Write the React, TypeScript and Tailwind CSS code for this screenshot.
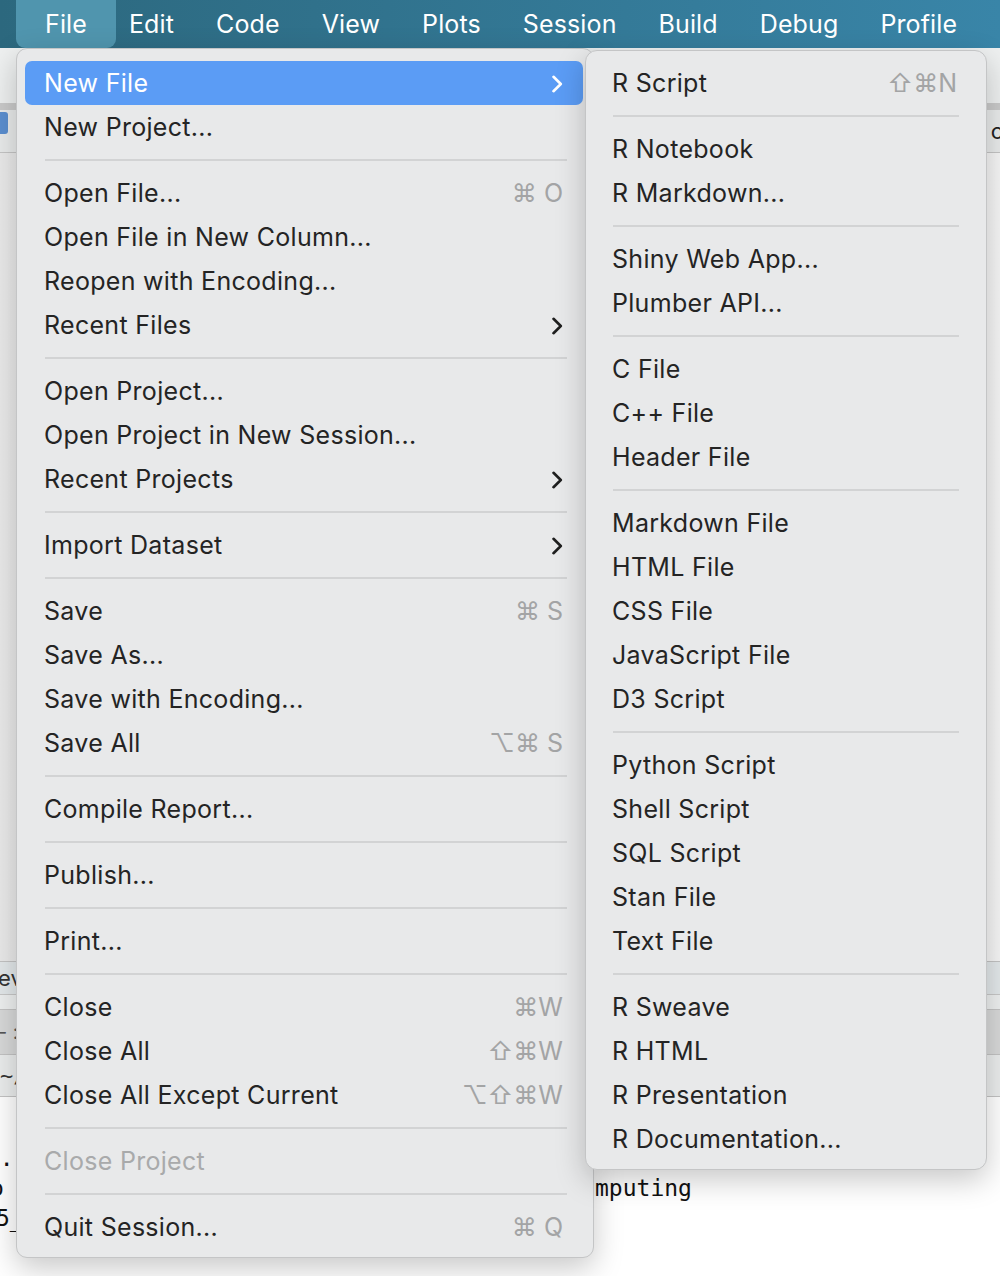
import React from "react";

type Item = { t: string; k?: string; sub?: boolean; hl?: boolean; dis?: boolean } | "sep";

const leftItems: Item[] = [
  { t: "New File", sub: true, hl: true },
  { t: "New Project..." },
  "sep",
  { t: "Open File...", k: "⌘ O" },
  { t: "Open File in New Column..." },
  { t: "Reopen with Encoding..." },
  { t: "Recent Files", sub: true },
  "sep",
  { t: "Open Project..." },
  { t: "Open Project in New Session..." },
  { t: "Recent Projects", sub: true },
  "sep",
  { t: "Import Dataset", sub: true },
  "sep",
  { t: "Save", k: "⌘ S" },
  { t: "Save As..." },
  { t: "Save with Encoding..." },
  { t: "Save All", k: "⌥⌘ S" },
  "sep",
  { t: "Compile Report..." },
  "sep",
  { t: "Publish..." },
  "sep",
  { t: "Print..." },
  "sep",
  { t: "Close", k: "⌘W" },
  { t: "Close All", k: "⇧⌘W" },
  { t: "Close All Except Current", k: "⌥⇧⌘W" },
  "sep",
  { t: "Close Project", dis: true },
  "sep",
  { t: "Quit Session...", k: "⌘ Q" },
];

const subItems: Item[] = [
  { t: "R Script", k: "⇧⌘N" },
  "sep",
  { t: "R Notebook" },
  { t: "R Markdown..." },
  "sep",
  { t: "Shiny Web App..." },
  { t: "Plumber API..." },
  "sep",
  { t: "C File" },
  { t: "C++ File" },
  { t: "Header File" },
  "sep",
  { t: "Markdown File" },
  { t: "HTML File" },
  { t: "CSS File" },
  { t: "JavaScript File" },
  { t: "D3 Script" },
  "sep",
  { t: "Python Script" },
  { t: "Shell Script" },
  { t: "SQL Script" },
  { t: "Stan File" },
  { t: "Text File" },
  "sep",
  { t: "R Sweave" },
  { t: "R HTML" },
  { t: "R Presentation" },
  { t: "R Documentation..." },
];

const Chevron = ({ white }: { white?: boolean }) => (
  <svg width="12" height="18" viewBox="0 0 12 18" className="shrink-0">
    <path
      d="M2.5 1.8 L9.8 9 L2.5 16.2"
      fill="none"
      stroke={white ? "#ffffff" : "#1f1f1f"}
      strokeWidth="2.6"
      strokeLinecap="round"
      strokeLinejoin="round"
    />
  </svg>
);

const MenuList = ({ items, sepClass }: { items: Item[]; sepClass: string }) => (
  <div className="flex flex-col">
    {items.map((it, i) =>
      it === "sep" ? (
        <div key={i} className="h-[22px] flex items-center">
          <div className={`h-[2px] bg-[#d2d3d4] ${sepClass}`} />
        </div>
      ) : (
        <div
          key={i}
          className={`h-[44px] flex items-center justify-between rounded-[7px] pl-[19px] pr-[20px] pt-[2px] ${
            it.hl ? "bg-[#5b9cf5] text-white" : it.dis ? "text-[#a9aaab]" : "text-[#242424]"
          }`}
        >
          <span className="whitespace-nowrap tracking-[0.012em]">{it.t}</span>
          {it.k ? (
            <span className="text-[#a3a4a5] whitespace-nowrap">{it.k}</span>
          ) : it.sub ? (
            <Chevron white={it.hl} />
          ) : null}
        </div>
      )
    )}
  </div>
);

const menuFont = { fontFamily: "Inter, 'DejaVu Sans', 'Noto Sans', sans-serif" };

export default function App() {
  const bar = ["Edit", "Code", "View", "Plots", "Session", "Build", "Debug", "Profile"];
  return (
    <div className="relative w-[1000px] h-[1276px] overflow-hidden bg-white" style={menuFont}>
      {/* menu bar */}
      <div className="h-[48px] flex items-center pl-[45px] gap-[42px] bg-gradient-to-r from-[#2c687e] to-[#3985a8] text-white text-[25px] tracking-[0.005em]">
        <span className="-mx-[29px] px-[29px] pt-[2px] h-[48px] flex items-center rounded-b-[9px] bg-[#5095ae]">File</span>
        {bar.map((b) => (
          <span key={b} className="pt-[2px]">{b}</span>
        ))}
      </div>
      {/* toolbar */}
      <div className="h-[55px] bg-[#eef0f0] relative">
        <div className="absolute left-[-6px] top-[64px] w-[14px] h-[22px] rounded-[3px] bg-[#5b8fd0]" />
      </div>
      <div className="h-[7px] bg-[#cacaca]" />
      <div className="h-[43px] bg-[#e9ebeb] border-b border-[#c5c5c5] flex items-center justify-end">
        <span className="text-[22px] text-[#222] mr-[-4px]">o</span>
      </div>
      {/* editor */}
      <div className="h-[808px] bg-gradient-to-r from-[#eaeaea] via-[#f3f3f3] to-[#f6f6f6]" />
      {/* console pane header */}
      <div className="border-t border-[#c3c3c3] h-[33px] bg-[#e3e8ea] flex items-center">
        <span className="text-[22px] text-[#333] ml-[-2px]">ev</span>
      </div>
      <div className="border-t border-[#c8c8c8] h-[15px] bg-[#eef0f0]" />
      <div className="border-t border-[#c3c3c3] h-[45px] bg-[#d8d9d9] flex items-center">
        <span className="text-[20px] text-[#555] ml-[-2px]">- :</span>
      </div>
      <div className="border-t border-[#c3c3c3] h-[42px] bg-[#ebeded] flex items-center">
        <span className="text-[22px] text-[#333]" style={{ fontFamily: "'DejaVu Sans Mono', monospace" }}>~/</span>
      </div>
      {/* console */}
      <div
        className="border-t border-[#c3c3c3] bg-white pt-[46px] text-[23px] leading-[30px] text-[#111]"
        style={{ fontFamily: "'DejaVu Sans Mono', monospace" }}
      >
        <div className="ml-[-14px]">..</div>
        <div className="flex">
          <span className="ml-[-10px] w-[605px]">o</span>
          <span>mputing</span>
        </div>
        <div className="ml-[-4px]">5_</div>
      </div>

      {/* File menu */}
      <div
        className="absolute left-[16px] top-[48px] w-[578px] h-[1210px] bg-[#e8e9ea] rounded-[11px] border border-[#c4c5c6] shadow-[0_10px_30px_rgba(0,0,0,0.22)] pt-[12px] pl-[8px] pr-[10px] text-[25px]"
      >
        <MenuList items={leftItems} sepClass="ml-[20px] mr-[16px] flex-1" />
      </div>

      {/* New File submenu */}
      <div
        className="absolute left-[585px] top-[50px] w-[402px] h-[1120px] bg-[#e8e9ea] rounded-[12px] border border-[#c4c5c6] shadow-[0_10px_30px_rgba(0,0,0,0.22)] pt-[10px] pl-[7px] pr-[9px] text-[25px]"
      >
        <MenuList items={subItems} sepClass="ml-[20px] mr-[18px] flex-1" />
      </div>
    </div>
  );
}
